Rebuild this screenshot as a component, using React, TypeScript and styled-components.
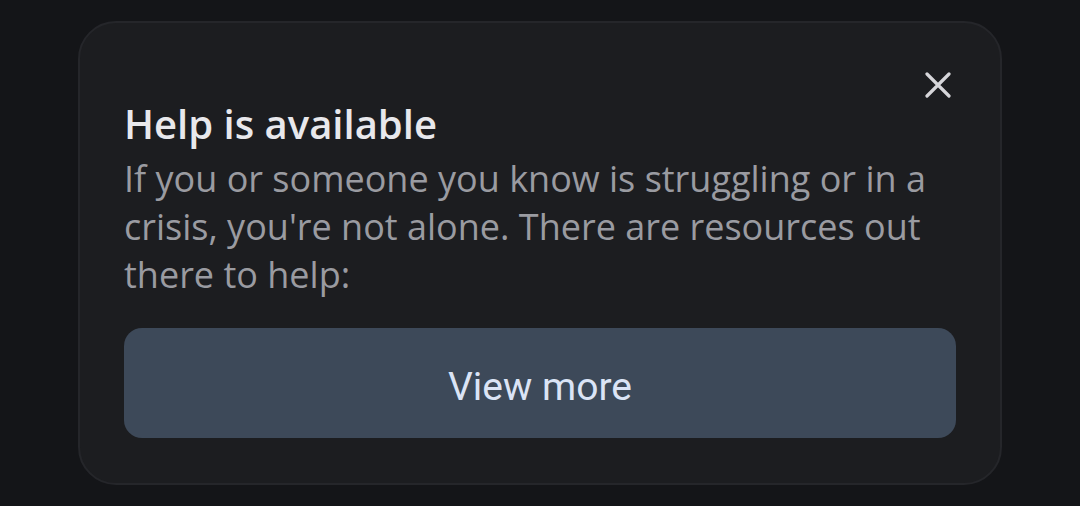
import React from 'react'
import styled, { createGlobalStyle } from 'styled-components'

const GlobalStyle = createGlobalStyle`
  html, body {
    margin: 0;
    padding: 0;
    background: #141518;
  }
  body {
    font-family: "Open Sans", Lato, sans-serif;
  }
`

const Page = styled.div`
  width: 1080px;
  height: 506px;
  padding: 21px 78px 0;
  box-sizing: border-box;
`

const Card = styled.div`
  position: relative;
  box-sizing: border-box;
  height: 464px;
  background: #1c1d20;
  border: 2px solid #25262a;
  border-radius: 38px;
  padding: 77px 44px 0;
  display: flex;
  flex-direction: column;
`

const CloseButton = styled.button`
  position: absolute;
  top: 44px;
  right: 44px;
  width: 36px;
  height: 36px;
  padding: 0;
  border: none;
  background: transparent;
  display: flex;
  align-items: center;
  justify-content: center;
  color: #d6d6da;
`

const Title = styled.h2`
  margin: 0;
  font-size: 40px;
  line-height: 48px;
  font-weight: 600;
  color: #e8e8ec;
`

const Body = styled.p`
  margin: 7px 0 0;
  font-size: 36px;
  line-height: 48px;
  color: #9a9ba1;
`

const ViewMore = styled.button`
  margin-top: 29px;
  height: 110px;
  padding: 7px 0 0;
  border: none;
  border-radius: 18px;
  background: #3d4959;
  color: #dbe4f6;
  font-family: Roboto, sans-serif;
  font-size: 39px;
`

export default function App() {
  return (
    <>
      <GlobalStyle />
      <Page>
        <Card>
          <CloseButton aria-label="Close">
            <svg width="26" height="26" viewBox="0 0 26 26">
              <path d="M2 2 L24 24 M24 2 L2 24" stroke="currentColor" strokeWidth="3.2" strokeLinecap="round" />
            </svg>
          </CloseButton>
          <Title>Help is available</Title>
          <Body>
            If you or someone you know is struggling or in a crisis, you're not alone. There are resources out there to help:
          </Body>
          <ViewMore>View more</ViewMore>
        </Card>
      </Page>
    </>
  )
}
